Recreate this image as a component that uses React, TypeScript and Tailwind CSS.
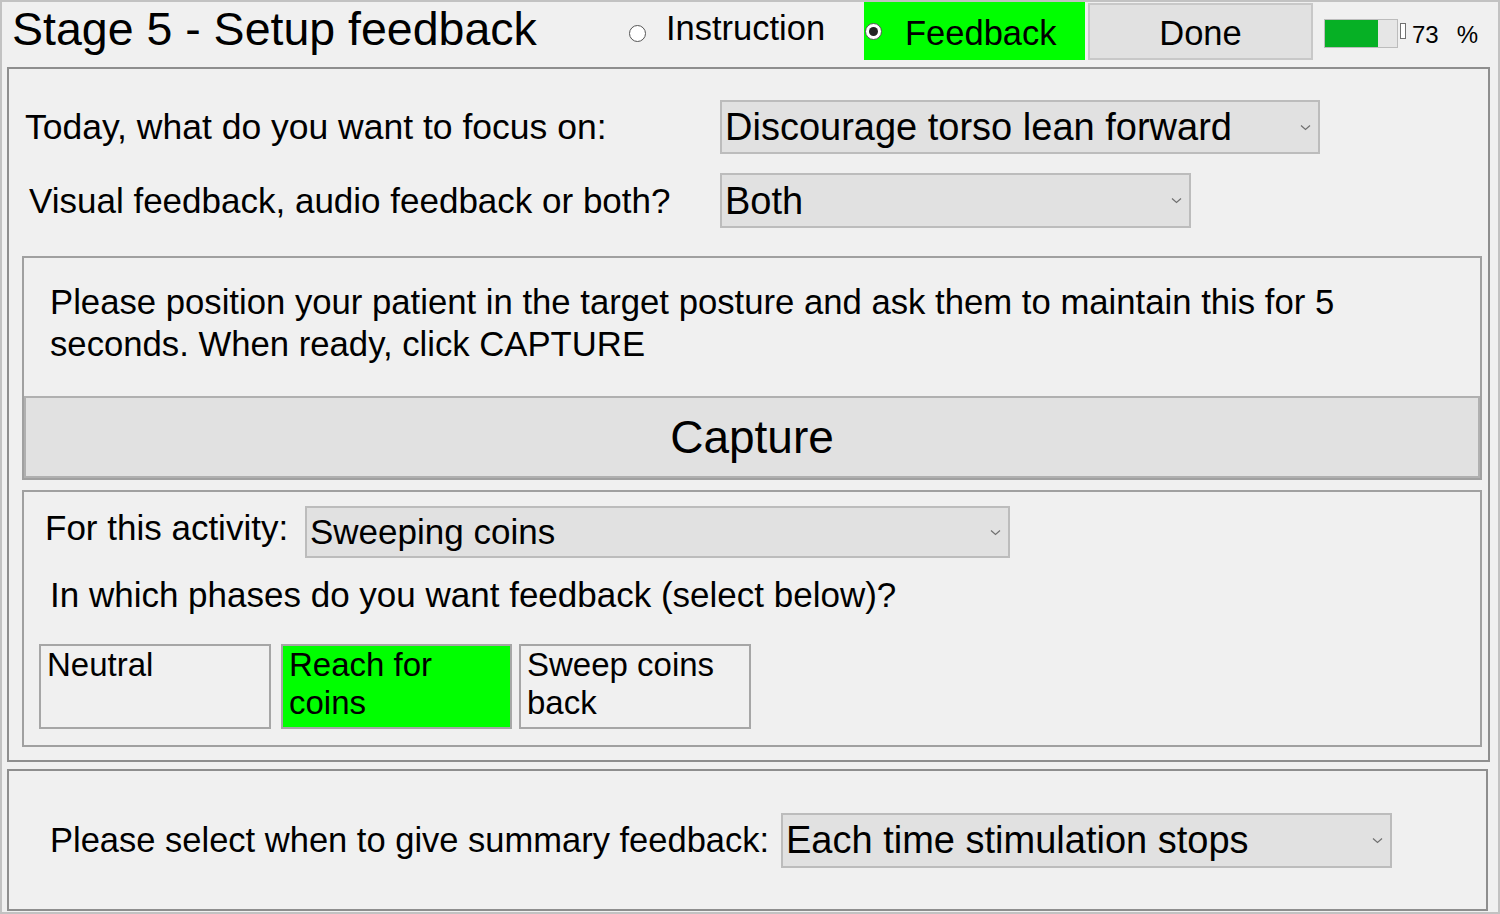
import React from "react"

interface DropdownProps {
  value: string
  className: string
  textClass: string
}

function Chevron() {
  return (
    <svg width="11" height="7" viewBox="0 0 11 7" className="shrink-0">
      <path d="M1 1.5 L5.5 5.5 L10 1.5" fill="none" stroke="#707070" strokeWidth="1.2" />
    </svg>
  )
}

function Dropdown({ value, className, textClass }: DropdownProps) {
  return (
    <div className={`flex items-center justify-between border-2 border-[#bcbcbc] bg-[#e1e1e1] pl-[3px] pr-[7px] ${className}`}>
      <span className={textClass}>{value}</span>
      <Chevron />
    </div>
  )
}

function PhaseBox({ label, active }: { label: React.ReactNode; active?: boolean }) {
  return (
    <div
      className={`h-[85px] border-2 border-[#a6a6a6] pl-[6px] text-[33px] leading-[38px] ${
        active ? "bg-[#00ff00]" : "bg-[#f0f0f0]"
      }`}
    >
      {label}
    </div>
  )
}

export default function App() {
  return (
    <div className="w-[1500px] h-[914px] overflow-hidden border-2 border-[#c2c2c2] bg-[#f0f0f0] font-['Liberation_Sans',Arial,sans-serif] text-black">
      {/* header */}
      <div className="flex h-[65px] items-start">
        <div className="ml-[10px] mt-[3px] w-[617px] shrink-0 text-[46.5px] leading-[48px]">
          Stage 5 - Setup feedback
        </div>

        <div className="flex w-[235px] shrink-0 items-start">
          <span className="mt-[23px] h-[17px] w-[17px] shrink-0 rounded-full border-[1.5px] border-[#555555] bg-white" />
          <span className="ml-[20px] mt-[7px] text-[34.5px] leading-[38px]">Instruction</span>
        </div>

        <div className="flex h-[58px] w-[221px] shrink-0 items-center bg-[#00ff00]">
          <span className="ml-[1px] flex h-[17px] w-[17px] shrink-0 items-center justify-center rounded-full border-[1.5px] border-[#555555] bg-white">
            <span className="h-[9px] w-[9px] rounded-full bg-[#222222]" />
          </span>
          <span className="ml-[23px] mt-[3px] text-[34.5px] leading-[38px]">Feedback</span>
        </div>

        <div className="ml-[3px] mt-[1px] flex h-[57px] w-[225px] shrink-0 items-center justify-center border-2 border-[#c8c8c8] bg-[#e1e1e1]">
          <span className="mt-[3px] text-[34.5px] leading-[38px]">Done</span>
        </div>

        <div className="ml-[11px] mt-[17px] flex h-[29px] w-[74px] shrink-0 border border-[#bcbcbc] bg-[#e6e6e6]">
          <div className="h-full w-[73%] bg-[#06b025]" />
        </div>
        <span className="ml-[2px] mt-[21px] h-[16px] w-[6px] shrink-0 border border-[#707070] bg-white" />
        <span className="ml-[6px] mt-[19px] text-[24px] leading-[28px]">73</span>
        <span className="ml-[18px] mt-[19px] text-[24px] leading-[28px]">%</span>
      </div>

      {/* main panel */}
      <div className="ml-[5px] flex h-[695px] w-[1483px] flex-col border-2 border-[#8e8e8e] pl-[13px]">
        <div className="mt-[31px] flex h-[54px] items-center">
          <div className="w-[698px] pl-[3px] text-[35.5px] leading-[40px]">Today, what do you want to focus on:</div>
          <Dropdown
            value="Discourage torso lean forward"
            className="h-[54px] w-[600px]"
            textClass="text-[38px] leading-[44px]"
          />
        </div>

        <div className="mt-[19px] flex h-[55px] items-center">
          <div className="w-[698px] pl-[7px] text-[35px] leading-[40px]">Visual feedback, audio feedback or both?</div>
          <Dropdown value="Both" className="h-[55px] w-[471px]" textClass="text-[38px] leading-[44px]" />
        </div>

        {/* capture group */}
        <div className="mt-[28px] flex h-[224px] w-[1460px] flex-col justify-between border-2 border-[#a0a0a0]">
          <p className="pl-[26px] pt-[23px] text-[34.7px] leading-[42px]">
            Please position your patient in the target posture and ask them to maintain this for 5
            <br />
            seconds. When ready, click CAPTURE
          </p>
          <div className="flex h-[82px] items-center justify-center border-2 border-[#b0b0b0] bg-[#e1e1e1]">
            <span className="text-[46px] leading-[50px]">Capture</span>
          </div>
        </div>

        {/* activity group */}
        <div className="mt-[10px] flex h-[257px] w-[1460px] flex-col border-2 border-[#a0a0a0]">
          <div className="mt-[14px] flex items-start">
            <div className="mt-[4px] w-[281px] pl-[21px] text-[35px] leading-[35px]">For this activity:</div>
            <Dropdown value="Sweeping coins" className="h-[52px] w-[705px]" textClass="text-[35px] leading-[44px]" />
          </div>
          <div className="mt-[17px] pl-[26px] text-[35px] leading-[40px]">
            In which phases do you want feedback (select below)?
          </div>
          <div className="mt-[29px] flex pl-[15px]">
            <div className="w-[232px]">
              <PhaseBox label="Neutral" />
            </div>
            <div className="ml-[10px] w-[231px]">
              <PhaseBox
                active
                label={
                  <>
                    Reach for
                    <br />
                    coins
                  </>
                }
              />
            </div>
            <div className="ml-[7px] w-[232px]">
              <PhaseBox
                label={
                  <>
                    Sweep coins
                    <br />
                    back
                  </>
                }
              />
            </div>
          </div>
        </div>
      </div>

      {/* summary panel */}
      <div className="ml-[5px] mt-[7px] flex h-[142px] w-[1481px] items-center border-2 border-[#8e8e8e]">
        <div className="w-[772px] pl-[41px] text-[34.5px] leading-[40px]">Please select when to give summary feedback:</div>
        <Dropdown
          value="Each time stimulation stops"
          className="h-[55px] w-[611px]"
          textClass="text-[38px] leading-[44px]"
        />
      </div>
    </div>
  )
}
